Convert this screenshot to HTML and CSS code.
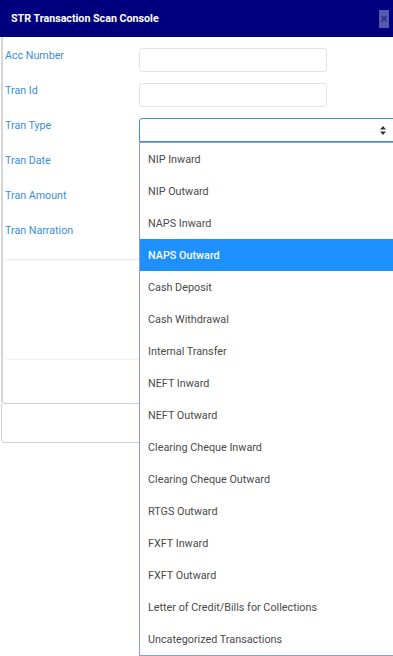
FILE: index.html
```html
<!DOCTYPE html>
<html lang="en">
  <head>
    <meta charset="UTF-8" />
    <meta name="viewport" content="width=device-width, initial-scale=1.0" />
    <title>STR Transaction Scan Console</title>
    <link rel="stylesheet" href="styles.css">
  </head>

  <body>
    <div class="modal">
      <div class="modal-header">
        <span class="modal-title">STR Transaction Scan Console</span>
        <button class="close">&times;</button>
      </div>

      <div class="modal-content">
        <form class="scan-form">
          <div class="form-row">
            <label>Acc Number</label>
            <input class="field" type="text" />
          </div>
          <div class="form-row">
            <label>Tran Id</label>
            <input class="field" type="text" />
          </div>
          <div class="form-row">
            <label>Tran Type</label>
            <div class="select-box">
              <svg class="select-arrow" width="6" height="9" viewBox="0 0 6 9">
                <path d="M3 0 L6 3.5 L0 3.5 Z M0 5.5 L6 5.5 L3 9 Z" fill="#333" />
              </svg>

              <ul class="dropdown">
                <li>NIP Inward</li>
                <li>NIP Outward</li>
                <li>NAPS Inward</li>
                <li class="active">NAPS Outward</li>
                <li>Cash Deposit</li>
                <li>Cash Withdrawal</li>
                <li>Internal Transfer</li>
                <li>NEFT Inward</li>
                <li>NEFT Outward</li>
                <li>Clearing Cheque Inward</li>
                <li>Clearing Cheque Outward</li>
                <li>RTGS Outward</li>
                <li>FXFT Inward</li>
                <li>FXFT Outward</li>
                <li>Letter of Credit/Bills for Collections</li>
                <li>Uncategorized Transactions</li>
              </ul>
            </div>
          </div>
          <div class="form-row">
            <label>Tran Date</label>
            <input class="field" type="text" />
          </div>
          <div class="form-row">
            <label>Tran Amount</label>
            <input class="field" type="text" />
          </div>
          <div class="form-row">
            <label>Tran Narration</label>
            <input class="field" type="text" />
          </div>
        </form>

        <div class="modal-footer"></div>
        <div class="modal-extra"></div>
      </div>

      <div class="modal-bottom"></div>
    </div>
  </body>
</html>
```

FILE: styles.css
```css
html {
  height: 100%;
}

body {
  margin: 0;
  min-height: 100%;
  overflow: hidden;
  background-color: #fff;
  font-family: Roboto, "Liberation Sans", sans-serif;
}

.modal {
  width: 400px;
}

.modal-header {
  display: flex;
  align-items: center;
  justify-content: space-between;
  height: 37px;
  padding: 0 4px 0 11px;
  background-color: #00007f;
}

.modal-title {
  color: #fff;
  font-size: 10.7px;
  font-weight: bold;
}

.close {
  width: 10px;
  height: 18px;
  margin-right: 7px;
  padding: 0;
  border: none;
  background-color: rgb(255 255 255 / 35%);
  color: #2b2b8c;
  font: bold 12px "Liberation Sans", sans-serif;
  line-height: 18px;
}

.modal-content {
  margin-left: 1px;
  border-left: 2px solid #d6d6d6;
  border-bottom: 1px solid #cfcfcf;
  border-bottom-left-radius: 4px;
}

.scan-form {
  display: flex;
  flex-direction: column;
  gap: 11px;
  padding: 11px 0 12px 2px;
}

.form-row {
  display: flex;
  align-items: flex-start;
}

.form-row label {
  width: 134px;
  padding-top: 1px;
  color: #3a8ddc;
  font-size: 10.7px;
  line-height: 13px;
}

.field {
  box-sizing: border-box;
  width: 188px;
  height: 24px;
  margin: 0;
  border: 1px solid #e4e4e4;
  border-radius: 3px;
  background-color: #fff;
}

.select-box {
  position: relative;
  box-sizing: border-box;
  width: 258px;
  height: 24px;
  border: 1px solid #3f8fd0;
  border-radius: 3px 0 0 0;
  background-color: #fff;
}

.select-arrow {
  position: absolute;
  left: 240px;
  top: 7px;
}

.dropdown {
  position: absolute;
  left: -1px;
  top: 23px;
  width: 258px;
  margin: 0;
  padding: 0;
  list-style: none;
  background-color: #fff;
  border: 1px solid #8c9dd2;
}

.dropdown li {
  box-sizing: border-box;
  height: 32px;
  padding: 2px 0 0 8px;
  color: #4a4a4a;
  font-size: 10.8px;
  line-height: 30px;
}

.dropdown li.active {
  background-color: #1e90ff;
  color: #fff;
  font-weight: 500;
}

.modal-footer {
  height: 99px;
  margin-left: 3px;
  border-top: 1px solid #e6e6e6;
}

.modal-extra {
  height: 43px;
  margin-left: 3px;
  border-top: 1px solid #efefef;
}

.modal-bottom {
  height: 38px;
  margin-left: 1px;
  border-left: 1px solid #d0d0d0;
  border-bottom: 1px solid #d0d0d0;
  border-bottom-left-radius: 4px;
}
```
